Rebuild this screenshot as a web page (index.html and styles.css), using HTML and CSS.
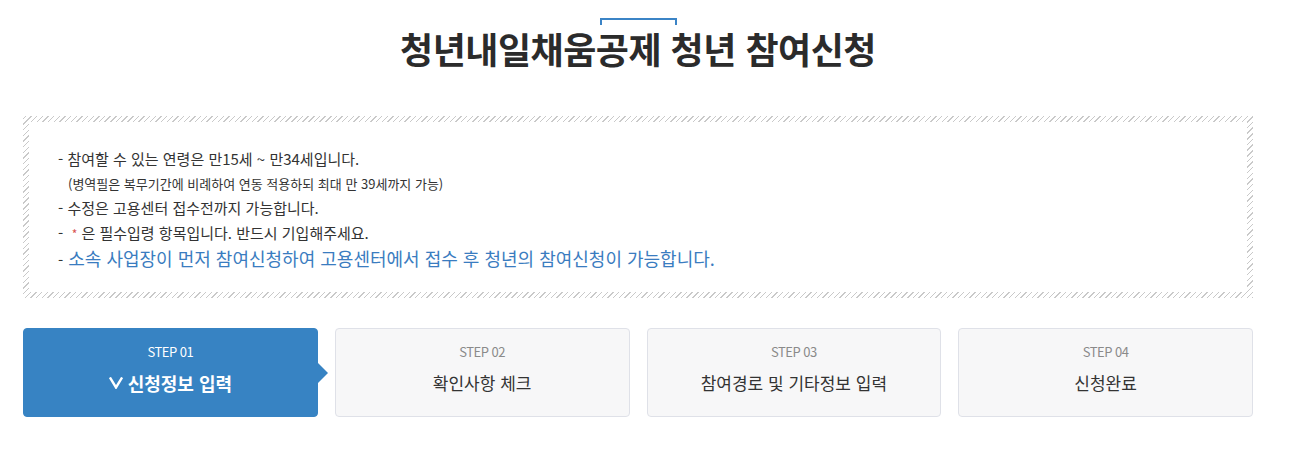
FILE: index.html
```html
<!DOCTYPE html>
<html lang="ko">
<head>
<meta charset="utf-8">
<title>청년내일채움공제 청년 참여신청</title>
<link rel="stylesheet" href="styles.css">
</head>
<body>
<div class="page">
  <div class="title-mark"></div>
  <h1 class="title">청년내일채움공제 청년 참여신청</h1>

  <div class="notice">
    <div class="notice-inner">
      <p class="line">- 참여할 수 있는 연령은 만15세 ~ 만34세입니다.</p>
      <p class="line sub">(병역필은 복무기간에 비례하여 연동 적용하되 최대 만 39세까지 가능)</p>
      <p class="line">- 수정은 고용센터 접수전까지 가능합니다.</p>
      <p class="line">- &nbsp;<span class="star">*</span> 은 필수입령 항목입니다. 반드시 기입해주세요.</p>
      <p class="line blue"><span class="dash">-</span> 소속 사업장이 먼저 참여신청하여 고용센터에서 접수 후 청년의 참여신청이 가능합니다.</p>
    </div>
  </div>

  <ol class="steps">
    <li class="step active">
      <span class="step-no">STEP 01</span>
      <span class="step-name"><svg class="check" viewBox="0 0 14 12" width="14" height="12"><path d="M1.5 1.5 L7 10.5 L12.5 1.5" fill="none" stroke="#fff" stroke-width="2.4" stroke-linecap="square"/></svg>신청정보 입력</span>
    </li>
    <li class="step">
      <span class="step-no">STEP 02</span>
      <span class="step-name">확인사항 체크</span>
    </li>
    <li class="step">
      <span class="step-no">STEP 03</span>
      <span class="step-name">참여경로 및 기타정보 입력</span>
    </li>
    <li class="step">
      <span class="step-no">STEP 04</span>
      <span class="step-name">신청완료</span>
    </li>
  </ol>
</div>
</body>
</html>
```

FILE: styles.css
```css
* { box-sizing: border-box; }
html, body { margin: 0; padding: 0; background: #fff; }
body {
  font-family: "Noto Sans CJK KR", "Noto Sans", sans-serif;
  color: #333;
}
.page {
  width: 1230px;
  margin-left: 23px;
}
.title-mark {
  width: 77px;
  height: 7px;
  margin: 18px auto 0;
  border: 2px solid #3b84c6;
  border-bottom: 0;
}
.title {
  margin: 3px 0 0;
  text-align: center;
  font-size: 36px;
  line-height: 40px;
  font-weight: 700;
  color: #2b2b2b;
  letter-spacing: -0.5px;
}
.notice {
  margin-top: 48px;
  padding: 6px;
  background: repeating-linear-gradient(135deg, #fff 0 1.5px, #c9c9c9 1.5px 2.5px, #fff 2.5px 4px);
}
.notice-inner {
  background: #fff;
  padding: 25px 29px 0;
  height: 170px;
}
.line {
  margin: 0;
  font-size: 15px;
  line-height: 24.5px;
  color: #333;
}
.line.sub {
  padding-left: 10px;
  font-size: 13px;
}
.star { color: #d9534f; font-size: 12px; }
.line.blue {
  color: #3a7cc0;
  font-size: 18px;
}
.line.blue .dash { color: #333; font-size: 15px; }
.steps {
  list-style: none;
  margin: 30px 0 0;
  padding: 0;
  display: grid;
  grid-template-columns: repeat(4, 1fr);
  gap: 17px;
}
.step {
  position: relative;
  height: 89px;
  border: 1px solid #dfe1e8;
  border-radius: 4px;
  background: #f7f7f8;
  display: flex;
  flex-direction: column;
  align-items: center;
  padding-top: 14px;
}
.step.active {
  background: #3783c3;
  border-color: #3783c3;
  color: #fff;
}
.step.active::after {
  content: "";
  position: absolute;
  right: -11px;
  top: 34px;
  border-left: 10px solid #3783c3;
  border-top: 10px solid transparent;
  border-bottom: 10px solid transparent;
}
.step-no {
  font-size: 13px;
  line-height: 18px;
  color: #8a8a8a;
  letter-spacing: -0.5px;
}
.step.active .step-no { color: #fff; }
.step-name {
  margin-top: 10px;
  font-size: 17px;
  line-height: 24px;
  color: #333;
  display: flex;
  align-items: center;
}
.step.active .step-name {
  color: #fff;
  font-weight: 700;
  font-size: 18px;
}
.check { margin-right: 5px; }
```
